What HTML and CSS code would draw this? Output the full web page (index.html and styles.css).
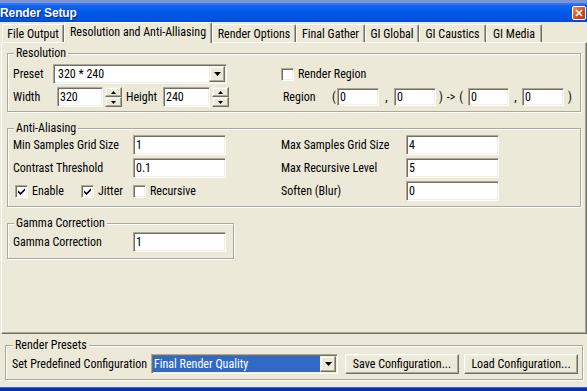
FILE: index.html
```html
<!DOCTYPE html>
<html>
<head>
<meta charset="utf-8">
<title>Render Setup</title>
<link rel="stylesheet" href="styles.css">
</head>
<body>
<div class="titlebar">
  <span class="title">Render Setup</span>
  <span class="close"><svg width="8" height="8" viewBox="0 0 8 8"><path d="M1 1L7 7M7 1L1 7" stroke="#fff" stroke-width="1.7"/></svg></span>
</div>
<div class="tabs">
  <div class="tab w-file">File Output</div>
  <div class="tab active w-res">Resolution and Anti-Alliasing</div>
  <div class="tab w-opt">Render Options</div>
  <div class="tab w-fg">Final Gather</div>
  <div class="tab w-gig">GI Global</div>
  <div class="tab w-gic">GI Caustics</div>
  <div class="tab w-gim">GI Media</div>
</div>
<div class="panel">
  <div class="group g-res">
    <div class="group-title">Resolution</div>
    <div class="rows res-rows">
      <div class="row">
        <span class="lbl w40">Preset</span>
        <div class="field combo w174"><span class="combo-text">320 * 240</span><span class="drop"><svg width="7" height="4" viewBox="0 0 7 4"><path d="M0 0H7L3.5 4Z"/></svg></span></div>
        <div class="check ml54"><span class="box"></span>Render Region</div>
      </div>
      <div class="row">
        <span class="lbl w44">Width</span>
        <div class="field w46">320</div>
        <div class="spin ml2"><span class="spin-btn"><svg width="5" height="3" viewBox="0 0 5 3"><path d="M0 3H5L2.5 0Z"/></svg></span><span class="spin-btn"><svg width="5" height="3" viewBox="0 0 5 3"><path d="M0 0H5L2.5 3Z"/></svg></span></div>
        <span class="lbl w37 ml4">Height</span>
        <div class="field w47">240</div>
        <div class="spin ml2"><span class="spin-btn"><svg width="5" height="3" viewBox="0 0 5 3"><path d="M0 3H5L2.5 0Z"/></svg></span><span class="spin-btn"><svg width="5" height="3" viewBox="0 0 5 3"><path d="M0 0H5L2.5 3Z"/></svg></span></div>
        <span class="lbl w49 ml54">Region</span>
        <span class="lbl w5">(</span>
        <div class="field w42 h18">0</div>
        <span class="lbl sep w15">,</span>
        <div class="field w42 h18">0</div>
        <span class="lbl arrow w32"><span>)</span><span>-&gt;</span><span>(</span></span>
        <div class="field w41 h18">0</div>
        <span class="lbl sep w13">,</span>
        <div class="field w42 h18">0</div>
        <span class="lbl ml4">)</span>
      </div>
    </div>
  </div>

  <div class="group g-aa">
    <div class="group-title">Anti-Aliasing</div>
    <div class="rows aa-rows">
      <div class="row">
        <span class="lbl w120">Min Samples Grid Size</span>
        <div class="field w93">1</div>
        <span class="lbl w125 ml55">Max Samples Grid Size</span>
        <div class="field w93">4</div>
      </div>
      <div class="row">
        <span class="lbl w120">Contrast Threshold</span>
        <div class="field w93">0.1</div>
        <span class="lbl w125 ml55">Max Recursive Level</span>
        <div class="field w93">5</div>
      </div>
      <div class="row">
        <div class="checks">
          <div class="check w66"><span class="box"><svg width="7" height="7" viewBox="0 0 7 7"><path d="M0 2.2L2.5 4.7L7 0.2V2.6L2.5 7.1L0 4.6Z"/></svg></span>Enable</div>
          <div class="check w52"><span class="box"><svg width="7" height="7" viewBox="0 0 7 7"><path d="M0 2.2L2.5 4.7L7 0.2V2.6L2.5 7.1L0 4.6Z"/></svg></span>Jitter</div>
          <div class="check"><span class="box"></span>Recursive</div>
        </div>
        <span class="lbl w125">Soften (Blur)</span>
        <div class="field w93">0</div>
      </div>
    </div>
  </div>

  <div class="group g-gamma">
    <div class="group-title">Gamma Correction</div>
    <div class="rows gamma-rows">
      <div class="row">
        <span class="lbl w120">Gamma Correction</span>
        <div class="field w93">1</div>
      </div>
    </div>
  </div>
</div>

<div class="group g-presets">
  <div class="group-title">Render Presets</div>
  <div class="rows presets-rows">
    <div class="row">
      <span class="lbl w139">Set Predefined Configuration</span>
      <div class="field combo w187"><span class="combo-text hl">Final Render Quality</span><span class="drop"><svg width="7" height="4" viewBox="0 0 7 4"><path d="M0 0H7L3.5 4Z"/></svg></span></div>
      <div class="btn w114 ml7">Save Configuration...</div>
      <div class="btn w114 ml5">Load Configuration...</div>
    </div>
  </div>
</div>
<div class="frame-bottom"></div>
</body>
</html>
```

FILE: styles.css
```css
* { box-sizing: border-box; }
html, body { margin: 0; padding: 0; }
body {
  width: 587px;
  height: 391px;
  overflow: hidden;
  background: #ECE9D8;
  font-family: "Roboto Condensed", "Liberation Sans", Arial, sans-serif;
  font-size: 12px;
  color: #000;
}

/* title bar */
.titlebar {
  height: 22px;
  display: flex;
  justify-content: space-between;
  background: linear-gradient(#8095CF 0, #8095CF 3px, #3A80F4 3px, #1164EE 6px, #0058E8 12px, #0053E1 19px, #0049D6 22px);
}
.title {
  color: #fff;
  font-family: "Liberation Sans", Arial, sans-serif;
  font-weight: bold;
  font-size: 12px;
  line-height: 14px;
  padding-top: 6px;
  letter-spacing: -0.1px;
  text-shadow: 1px 1px 0 #0A2A80;
}
.close {
  width: 14px;
  height: 14px;
  margin: 6px 1px 0 0;
  border: 1px solid #fff;
  border-radius: 2px;
  background: linear-gradient(135deg, #F0926E, #D6441C 60%, #C33A14);
  display: flex;
  align-items: center;
  justify-content: center;
}

/* tabs */
.tabs {
  height: 20px;
  display: flex;
  align-items: flex-end;
  padding-left: 2px;
}
.tab {
  height: 18px;
  border-top: 1px solid #fff;
  border-left: 1px solid #fff;
  border-right: 1px solid #716F64;
  box-shadow: inset -1px 0 #ACA899;
  border-radius: 2px 2px 0 0;
  display: flex;
  align-items: center;
  justify-content: center;
  white-space: nowrap;
  padding-top: 1px;
}
.tab.active {
  height: 21px;
  margin-bottom: -1px;
  background: #ECE9D8;
  position: relative;
  z-index: 1;
  padding-top: 0;
  padding-bottom: 2px;
}
.w-file { width: 62px; }
.w-res { width: 148px; }
.w-opt { width: 84px; }
.w-fg { width: 69px; }
.w-gig { width: 54px; }
.w-gic { width: 67px; }
.w-gim { width: 56px; }

/* panel */
.panel {
  margin-left: 1px;
  width: 586px;
  height: 292px;
  border: 1px solid;
  border-color: #fff #716F64 #716F64 #fff;
  box-shadow: inset -1px -1px #ACA899;
  padding: 0 5px;
}

/* group boxes */
.group {
  border: 1px solid #ACA899;
  box-shadow: 1px 1px 0 #fff, inset 1px 1px 0 #fff;
  padding: 0 5px;
}
.group-title {
  display: table;
  margin: -7px 0 0 1px;
  padding: 0 2px;
  line-height: 13px;
  background: #ECE9D8;
  white-space: nowrap;
}
.g-res { width: 574px; margin-top: 10px; padding-bottom: 4px; }
.g-aa { width: 574px; margin-top: 16px; padding-bottom: 5px; }
.g-gamma { width: 227px; margin-top: 16px; padding-bottom: 6px; }
.g-presets { width: 578px; margin: 11px 0 0 5px; padding: 0 6px 5px 6px; }

.rows { display: flex; flex-direction: column; gap: 3px; }
.res-rows { padding-top: 4px; }
.gamma-rows { padding-top: 2px; }
.presets-rows { padding-top: 2px; }
.row { display: flex; align-items: center; height: 20px; }

.lbl { white-space: nowrap; flex: none; }
.sep { text-align: center; }
.arrow { display: flex; justify-content: space-between; padding: 0 5px 0 3px; }

/* sunken field */
.field {
  flex: none;
  height: 20px;
  background: #fff;
  border: 1px solid;
  border-color: #ACA899 #fff #fff #ACA899;
  box-shadow: inset 1px 1px #716F64, inset -1px -1px #F1EFE2;
  padding: 0 2px;
  display: flex;
  align-items: center;
  white-space: nowrap;
}
.h18 { height: 18px; }
.combo { padding: 1px; }
.combo-text { flex: 1; padding-left: 3px; align-self: stretch; display: flex; align-items: center; }
.combo-text.hl { background: #316AC5; color: #fff; padding-left: 1px; }
.drop {
  width: 16px;
  height: 16px;
  flex: none;
  background: #ECE9D8;
  border: 1px solid;
  border-color: #F1EFE2 #716F64 #716F64 #F1EFE2;
  box-shadow: inset -1px -1px #ACA899, inset 1px 1px #fff;
  display: flex;
  align-items: center;
  justify-content: center;
}

/* spinner */
.spin { width: 17px; height: 20px; display: flex; flex-direction: column; flex: none; }
.spin-btn {
  height: 10px;
  background: #ECE9D8;
  border: 1px solid;
  border-color: #F1EFE2 #716F64 #716F64 #F1EFE2;
  box-shadow: inset -1px -1px #ACA899, inset 1px 1px #fff;
  display: flex;
  align-items: center;
  justify-content: center;
}

/* checkbox */
.check { display: flex; align-items: center; white-space: nowrap; flex: none; }
.box {
  width: 13px;
  height: 13px;
  margin-right: 4px;
  background: #fff;
  border: 1px solid;
  border-color: #ACA899 #fff #fff #ACA899;
  box-shadow: inset 1px 1px #716F64, inset -1px -1px #F1EFE2;
  display: flex;
  align-items: center;
  justify-content: center;
  flex: none;
}
.checks { width: 268px; display: flex; padding-left: 2px; flex: none; }

/* buttons */
.btn {
  flex: none;
  height: 20px;
  background: #ECE9D8;
  border: 1px solid;
  border-color: #fff #716F64 #716F64 #fff;
  box-shadow: inset -1px -1px #ACA899, inset 1px 1px #F1EFE2;
  display: flex;
  align-items: center;
  justify-content: center;
  white-space: nowrap;
}

.frame-bottom {
  margin-top: 7px;
  height: 4px;
  background: linear-gradient(#3567DC 0, #3567DC 1px, #0A2FAE 1px);
}

/* sizes */
.w5 { width: 5px; }
.w13 { width: 13px; }
.w15 { width: 15px; }
.w32 { width: 32px; }
.w37 { width: 37px; }
.w40 { width: 40px; }
.w41 { width: 41px; }
.w42 { width: 42px; }
.w44 { width: 44px; }
.w46 { width: 46px; }
.w47 { width: 47px; }
.w49 { width: 49px; }
.w52 { width: 52px; }
.w66 { width: 66px; }
.w93 { width: 93px; }
.w114 { width: 114px; }
.w120 { width: 120px; }
.w125 { width: 125px; }
.w139 { width: 139px; }
.w174 { width: 174px; }
.w187 { width: 187px; }
.ml2 { margin-left: 2px; }
.ml4 { margin-left: 4px; }
.ml5 { margin-left: 5px; }
.ml7 { margin-left: 7px; }
.ml54 { margin-left: 54px; }
.ml55 { margin-left: 55px; }
```
